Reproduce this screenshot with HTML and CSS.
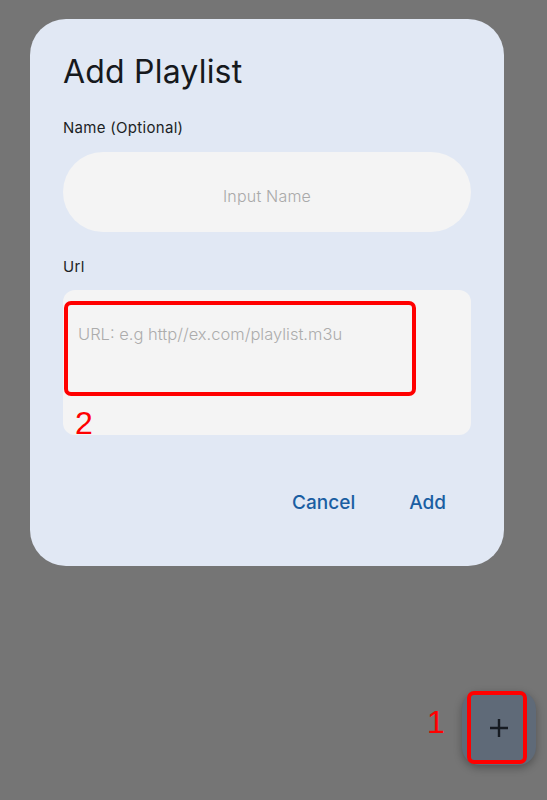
FILE: index.html
```html
<!DOCTYPE html>
<html lang="en">
<head>
<meta charset="utf-8">
<title>Add Playlist</title>
<link rel="stylesheet" href="styles.css">
</head>
<body>
<div class="screen">
  <div class="dialog">
    <h1 class="title">Add Playlist</h1>
    <label class="label label-name">Name (Optional)</label>
    <div class="pill-input"><span class="placeholder">Input Name</span></div>
    <label class="label label-url">Url</label>
    <div class="url-input">
      <span class="url-placeholder">URL: e.g http//ex.com/playlist.m3u</span>
      <div class="mark-box mark-url"></div>
      <span class="mark-num mark-num-2">2</span>
    </div>
    <div class="actions">
      <button class="text-btn">Cancel</button>
      <button class="text-btn">Add</button>
    </div>
  </div>
  <span class="mark-num mark-num-1">1</span>
  <button class="fab" aria-label="Add">
    <svg width="22" height="22" viewBox="0 0 22 22"><path d="M11 2v18M2 11h18" stroke="#161b22" stroke-width="2.4" fill="none"/></svg>
  </button>
  <div class="mark-box mark-fab"></div>
</div>
</body>
</html>
```
FILE: styles.css
```css
* { box-sizing: border-box; }
html, body { margin: 0; padding: 0; }
body {
  background: #757575;
  font-family: Inter, "Noto Sans", sans-serif;
}
.screen {
  position: relative;
  width: 547px;
  height: 800px;
  padding: 19px 0 0 30px;
}
.dialog {
  width: 474px;
  height: 547px;
  background: #e1e8f4;
  border-radius: 36px;
  padding: 34px 33px 0 33px;
  display: flex;
  flex-direction: column;
}
.title {
  margin: 0;
  font-size: 32px;
  line-height: 38px;
  font-weight: 400;
  color: #16191d;
  letter-spacing: 0.2px;
}
.label {
  display: block;
  font-size: 15px;
  line-height: 20px;
  color: #1c1f24;
  letter-spacing: 0.3px;
}
.label-name { margin-top: 27px; }
.label-url { margin-top: 25px; }
.pill-input {
  margin-top: 14px;
  height: 80px;
  border-radius: 40px;
  background: #f4f4f4;
  display: flex;
  align-items: center;
  justify-content: center;
  padding-top: 8px;
}
.placeholder {
  font-size: 16px;
  color: #a9a9a9;
  font-weight: 300;
  letter-spacing: 0.2px;
}
.url-input {
  position: relative;
  margin-top: 13px;
  height: 145px;
  border-radius: 12px;
  background: #f4f4f4;
  padding: 33px 15px 0 15px;
}
.url-placeholder {
  font-size: 16.5px;
  line-height: 22px;
  color: #acacac;
  font-weight: 300;
}
.mark-box {
  position: absolute;
  border: 4px solid #ff0000;
  border-radius: 7px;
}
.mark-url {
  left: 1px;
  top: 11px;
  width: 352px;
  height: 95px;
}
.mark-num {
  position: absolute;
  font-family: "Liberation Sans", Arial, sans-serif;
  font-size: 32px;
  line-height: 32px;
  color: #ff0000;
}
.mark-num-2 {
  left: 12px;
  top: 117px;
}
.actions {
  display: flex;
  justify-content: flex-end;
  gap: 54px;
  margin-top: 56px;
  margin-right: 25px;
}
.text-btn {
  background: none;
  border: 0;
  padding: 0;
  font-family: Inter, "Noto Sans", sans-serif;
  font-size: 19px;
  line-height: 24px;
  font-weight: 500;
  color: #1a5ea2;
}
.fab {
  position: absolute;
  left: 462px;
  top: 691px;
  width: 74px;
  height: 74px;
  border: 0;
  border-radius: 18px;
  background: #5f6a78;
  box-shadow: 0 3px 8px rgba(0,0,0,0.3);
  display: flex;
  align-items: center;
  justify-content: center;
  padding: 0;
}
.mark-fab {
  left: 467px;
  top: 691px;
  width: 60px;
  height: 73px;
}
.mark-num-1 {
  left: 427px;
  top: 706px;
}
```
